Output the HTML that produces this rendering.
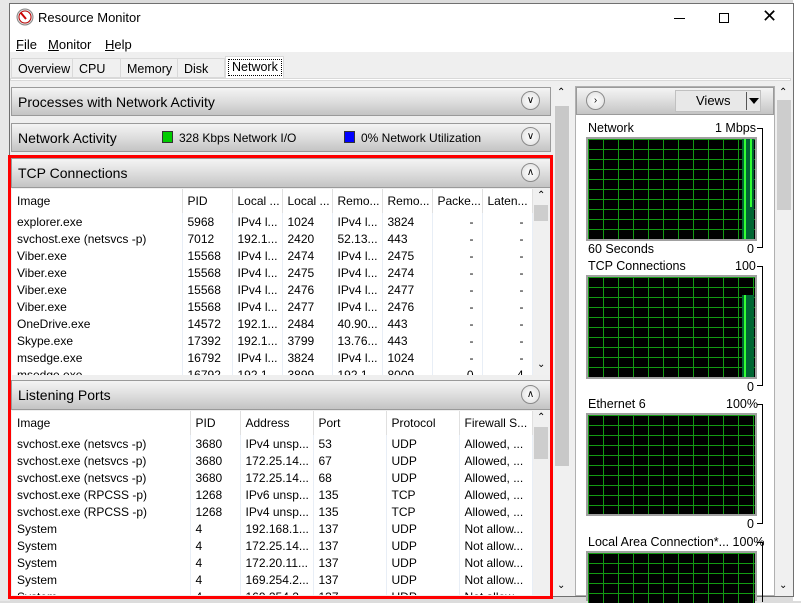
<!DOCTYPE html>
<html><head><meta charset="utf-8"><style>
*{margin:0;padding:0;box-sizing:border-box}
body{width:801px;height:601px;overflow:hidden;background:#dcdcdc;font-family:"Liberation Sans",sans-serif;font-size:12px;color:#000;position:relative}
.a{position:absolute}
.hdr{position:absolute;background:linear-gradient(#f4f4f4,#e0e0e0 45%,#c4c4c4);border:1px solid #9a9a9a;font-size:14px;padding-left:6px;display:flex;align-items:center}
.btn{position:absolute;width:19px;height:19px;border-radius:50%;border:1px solid #8a8a8a;background:radial-gradient(#fff,#ddd);font-size:10px;text-align:center;line-height:17px}
table{border-collapse:collapse;table-layout:fixed;font-size:12px}
td{height:17px;padding-left:5px;white-space:nowrap;overflow:hidden;border-right:1px solid #e8eef6}
tr.h td{height:24px;border-right:1px solid #e0e0e0}
.r{text-align:right;padding-right:8px}
.grid{position:absolute;border:2px solid #a0a0a0;background:#000}
.grid svg{display:block}
.br{position:absolute;border:1px solid #000;border-left:none;width:6px}
.sb{position:absolute;background:#f0f0f0}
.th{position:absolute;background:#cdcdcd}
</style></head><body>
<svg width="0" height="0" style="position:absolute"><defs><pattern id="g" width="15" height="10" patternUnits="userSpaceOnUse"><rect width="15" height="10" fill="#000"/><rect x="0" y="0" width="1" height="10" fill="#139a13"/><rect x="0" y="0" width="15" height="1" fill="#139a13"/></pattern></defs></svg>
<div class="a" style="left:0;top:0;width:10px;height:601px;background:#e8e8e8"></div>
<div class="a" style="left:793px;top:0;width:8px;height:601px;background:#fff"></div>
<div class="a" style="left:9px;top:3px;width:785px;height:594px;background:#efefef;border:1px solid #707070"></div>
<div class="a" style="left:10px;top:4px;width:783px;height:48px;background:#fff"></div>
<svg class="a" style="left:16px;top:8px" width="18" height="18"><circle cx="9" cy="9" r="8" fill="#ddd" stroke="#888"/><circle cx="9" cy="9" r="6" fill="#fff" stroke="#b00"/><line x1="5" y1="5" x2="10" y2="11" stroke="#c00" stroke-width="2"/></svg>
<div class="a" style="left:38px;top:10px;font-size:13px">Resource Monitor</div>
<div class="a" style="left:674px;top:18px;width:11px;height:1px;background:#000"></div>
<div class="a" style="left:719px;top:13px;width:10px;height:10px;border:1px solid #000"></div>
<div class="a" style="left:762px;top:6px;font-size:18px">✕</div>
<div class="a" style="left:16px;top:37px;font-size:13px"><u>F</u>ile</div>
<div class="a" style="left:48px;top:37px;font-size:13px"><u>M</u>onitor</div>
<div class="a" style="left:105px;top:37px;font-size:13px"><u>H</u>elp</div>
<div class="a" style="left:11px;top:58px;width:214px;height:20px;border:1px solid #d9d9d9;background:#f0f0f0"></div>
<div class="a" style="left:18px;top:62px;font-size:12.5px">Overview</div>
<div class="a" style="left:72px;top:58px;width:1px;height:20px;background:#d9d9d9"></div>
<div class="a" style="left:79px;top:62px;font-size:12.5px">CPU</div>
<div class="a" style="left:120px;top:58px;width:1px;height:20px;background:#d9d9d9"></div>
<div class="a" style="left:127px;top:62px;font-size:12.5px">Memory</div>
<div class="a" style="left:177px;top:58px;width:1px;height:20px;background:#d9d9d9"></div>
<div class="a" style="left:184px;top:62px;font-size:12.5px">Disk</div>
<div class="a" style="left:225px;top:56px;width:59px;height:22px;border:1px solid #d9d9d9;border-bottom:none;background:#fff"></div>
<div class="a" style="left:228px;top:59px;width:54px;height:17px;border:1px dotted #000;font-size:12.5px;padding-left:3px">Network</div>
<div class="a" style="left:10px;top:78px;width:781px;height:3px;border:1px solid #d9d9d9;background:#fff"></div>
<div class="hdr" style="left:11px;top:87px;width:540px;height:29px">Processes with Network Activity</div>
<div class="btn" style="left:521px;top:91px">&#8744;</div>
<div class="hdr" style="left:11px;top:123px;width:540px;height:29px">Network Activity
<span class="a" style="left:150px;top:7px;width:11px;height:12px;background:#0c0;border:1px solid #333"></span><span class="a" style="left:167px;top:7px;font-size:12px">328 Kbps Network I/O</span>
<span class="a" style="left:332px;top:7px;width:11px;height:12px;background:#00f;border:1px solid #333"></span><span class="a" style="left:349px;top:7px;font-size:12px">0% Network Utilization</span></div>
<div class="btn" style="left:521px;top:127px">&#8744;</div>
<div class="hdr" style="left:11px;top:158px;width:540px;height:30px">TCP Connections</div>
<div class="btn" style="left:521px;top:163px">&#8743;</div>
<div class="a" style="left:12px;top:189px;width:538px;height:186px;background:#fff;overflow:hidden">
<table style="width:520px"><colgroup><col style="width:170px"><col style="width:50px"><col style="width:50px"><col style="width:50px"><col style="width:50px"><col style="width:50px"><col style="width:50px"><col style="width:50px"></colgroup>
<tr class="h"><td>Image</td><td>PID</td><td>Local ...</td><td>Local ...</td><td>Remo...</td><td>Remo...</td><td>Packe...</td><td>Laten...</td></tr>
<tr><td>explorer.exe</td><td>5968</td><td>IPv4 l...</td><td>1024</td><td>IPv4 l...</td><td>3824</td><td class="r">-</td><td class="r">-</td></tr>
<tr><td>svchost.exe (netsvcs -p)</td><td>7012</td><td>192.1...</td><td>2420</td><td>52.13...</td><td>443</td><td class="r">-</td><td class="r">-</td></tr>
<tr><td>Viber.exe</td><td>15568</td><td>IPv4 l...</td><td>2474</td><td>IPv4 l...</td><td>2475</td><td class="r">-</td><td class="r">-</td></tr>
<tr><td>Viber.exe</td><td>15568</td><td>IPv4 l...</td><td>2475</td><td>IPv4 l...</td><td>2474</td><td class="r">-</td><td class="r">-</td></tr>
<tr><td>Viber.exe</td><td>15568</td><td>IPv4 l...</td><td>2476</td><td>IPv4 l...</td><td>2477</td><td class="r">-</td><td class="r">-</td></tr>
<tr><td>Viber.exe</td><td>15568</td><td>IPv4 l...</td><td>2477</td><td>IPv4 l...</td><td>2476</td><td class="r">-</td><td class="r">-</td></tr>
<tr><td>OneDrive.exe</td><td>14572</td><td>192.1...</td><td>2484</td><td>40.90...</td><td>443</td><td class="r">-</td><td class="r">-</td></tr>
<tr><td>Skype.exe</td><td>17392</td><td>192.1...</td><td>3799</td><td>13.76...</td><td>443</td><td class="r">-</td><td class="r">-</td></tr>
<tr><td>msedge.exe</td><td>16792</td><td>IPv4 l...</td><td>3824</td><td>IPv4 l...</td><td>1024</td><td class="r">-</td><td class="r">-</td></tr>
<tr><td>msedge.exe</td><td>16792</td><td>192.1...</td><td>3899</td><td>192.1...</td><td>8009</td><td class="r">0</td><td class="r">4</td></tr>
</table>
<div class="sb" style="left:521px;top:0;width:17px;height:186px"></div>
<div class="th" style="left:522px;top:16px;width:14px;height:16px"></div>
<div class="a" style="left:525px;top:1px;font-size:10px">&#8963;</div>
<div class="a" style="left:525px;top:170px;font-size:10px">&#8964;</div>
</div>
<div class="hdr" style="left:11px;top:380px;width:540px;height:30px">Listening Ports</div>
<div class="btn" style="left:521px;top:385px">&#8743;</div>
<div class="a" style="left:12px;top:411px;width:538px;height:184px;background:#fff;overflow:hidden">
<table style="width:520px"><colgroup><col style="width:178px"><col style="width:50px"><col style="width:73px"><col style="width:73px"><col style="width:73px"><col style="width:73px"></colgroup>
<tr class="h"><td>Image</td><td>PID</td><td>Address</td><td>Port</td><td>Protocol</td><td>Firewall S...</td></tr>
<tr><td>svchost.exe (netsvcs -p)</td><td>3680</td><td>IPv4 unsp...</td><td>53</td><td>UDP</td><td>Allowed, ...</td></tr>
<tr><td>svchost.exe (netsvcs -p)</td><td>3680</td><td>172.25.14...</td><td>67</td><td>UDP</td><td>Allowed, ...</td></tr>
<tr><td>svchost.exe (netsvcs -p)</td><td>3680</td><td>172.25.14...</td><td>68</td><td>UDP</td><td>Allowed, ...</td></tr>
<tr><td>svchost.exe (RPCSS -p)</td><td>1268</td><td>IPv6 unsp...</td><td>135</td><td>TCP</td><td>Allowed, ...</td></tr>
<tr><td>svchost.exe (RPCSS -p)</td><td>1268</td><td>IPv4 unsp...</td><td>135</td><td>TCP</td><td>Allowed, ...</td></tr>
<tr><td>System</td><td>4</td><td>192.168.1...</td><td>137</td><td>UDP</td><td>Not allow...</td></tr>
<tr><td>System</td><td>4</td><td>172.25.14...</td><td>137</td><td>UDP</td><td>Not allow...</td></tr>
<tr><td>System</td><td>4</td><td>172.20.11...</td><td>137</td><td>UDP</td><td>Not allow...</td></tr>
<tr><td>System</td><td>4</td><td>169.254.2...</td><td>137</td><td>UDP</td><td>Not allow...</td></tr>
<tr><td>System</td><td>4</td><td>169.254.2...</td><td>137</td><td>UDP</td><td>Not allow...</td></tr>
</table>
<div class="sb" style="left:521px;top:0;width:17px;height:184px"></div>
<div class="th" style="left:522px;top:16px;width:14px;height:32px"></div>
<div class="a" style="left:525px;top:1px;font-size:10px">&#8963;</div>
</div>
<div class="a" style="left:8px;top:155px;width:545px;height:444px;border:3px solid #f00"></div>
<div class="sb" style="left:554px;top:86px;width:16px;height:510px"></div>
<div class="th" style="left:555px;top:106px;width:14px;height:360px;background:#c8c8c8"></div>
<div class="a" style="left:557px;top:87px;font-size:10px">&#8963;</div>
<div class="a" style="left:557px;top:580px;font-size:10px">&#8964;</div>
<div class="a" style="left:575px;top:86px;width:200px;height:510px;background:#fff;border:1px solid #b0b0b0"></div>
<div class="hdr" style="left:576px;top:87px;width:198px;height:28px"></div>
<div class="btn" style="left:586px;top:91px">&#8250;</div>
<div class="a" style="left:675px;top:90px;width:86px;height:22px;background:#e8e8e8;border:1px solid #c0c0c0;font-size:13px;padding-left:20px;line-height:20px">Views</div>
<div class="a" style="left:746px;top:92px;width:1px;height:18px;background:#555"></div>
<div class="a" style="left:749px;top:98px;border:5px solid transparent;border-top:6px solid #000"></div>
<div class="a" style="left:588px;top:121px;font-size:12.5px">Network</div><div class="a" style="left:715px;top:121px;font-size:12.5px">1 Mbps</div>
<div class="grid" style="left:586px;top:137px;width:171px;height:104px"><svg width="167" height="100"><rect width="167" height="100" fill="url(#g)"/></svg></div>
<div class="a" style="left:742px;top:139px;width:12px;height:100px;background:#063"></div>
<div class="a" style="left:744px;top:139px;width:2px;height:100px;background:#3f3"></div>
<div class="a" style="left:750px;top:139px;width:2px;height:68px;background:#3f3"></div>
<div class="br" style="left:757px;top:128px;height:120px"></div>
<div class="a" style="left:588px;top:242px;font-size:12.5px">60 Seconds</div><div class="a" style="left:747px;top:242px;font-size:12.5px">0</div>
<div class="a" style="left:588px;top:259px;font-size:12.5px">TCP Connections</div><div class="a" style="left:735px;top:259px;font-size:12.5px">100</div>
<div class="grid" style="left:586px;top:275px;width:171px;height:104px"><svg width="167" height="100"><rect width="167" height="100" fill="url(#g)"/></svg></div>
<div class="a" style="left:742px;top:295px;width:12px;height:82px;background:#063"></div>
<div class="a" style="left:744px;top:295px;width:2px;height:82px;background:#3f3"></div>
<div class="br" style="left:757px;top:266px;height:120px"></div>
<div class="a" style="left:747px;top:380px;font-size:12.5px">0</div>
<div class="a" style="left:588px;top:397px;font-size:12.5px">Ethernet 6</div><div class="a" style="left:726px;top:397px;font-size:12.5px">100%</div>
<div class="grid" style="left:586px;top:413px;width:171px;height:103px"><svg width="167" height="99"><rect width="167" height="99" fill="url(#g)"/></svg></div>
<div class="br" style="left:757px;top:404px;height:120px"></div>
<div class="a" style="left:747px;top:517px;font-size:12.5px">0</div>
<div class="a" style="left:588px;top:535px;font-size:12.5px">Local Area Connection*... 100%</div>
<div class="grid" style="left:586px;top:551px;width:171px;height:50px"><svg width="167" height="50"><rect width="167" height="50" fill="url(#g)"/></svg></div>
<div class="br" style="left:757px;top:542px;height:60px;border-bottom:none"></div>
<div class="sb" style="left:776px;top:86px;width:16px;height:510px"></div>
<div class="th" style="left:777px;top:100px;width:14px;height:110px"></div>
<div class="a" style="left:779px;top:87px;font-size:10px">&#8963;</div>
<div class="a" style="left:779px;top:580px;font-size:10px">&#8964;</div>
</body></html>
